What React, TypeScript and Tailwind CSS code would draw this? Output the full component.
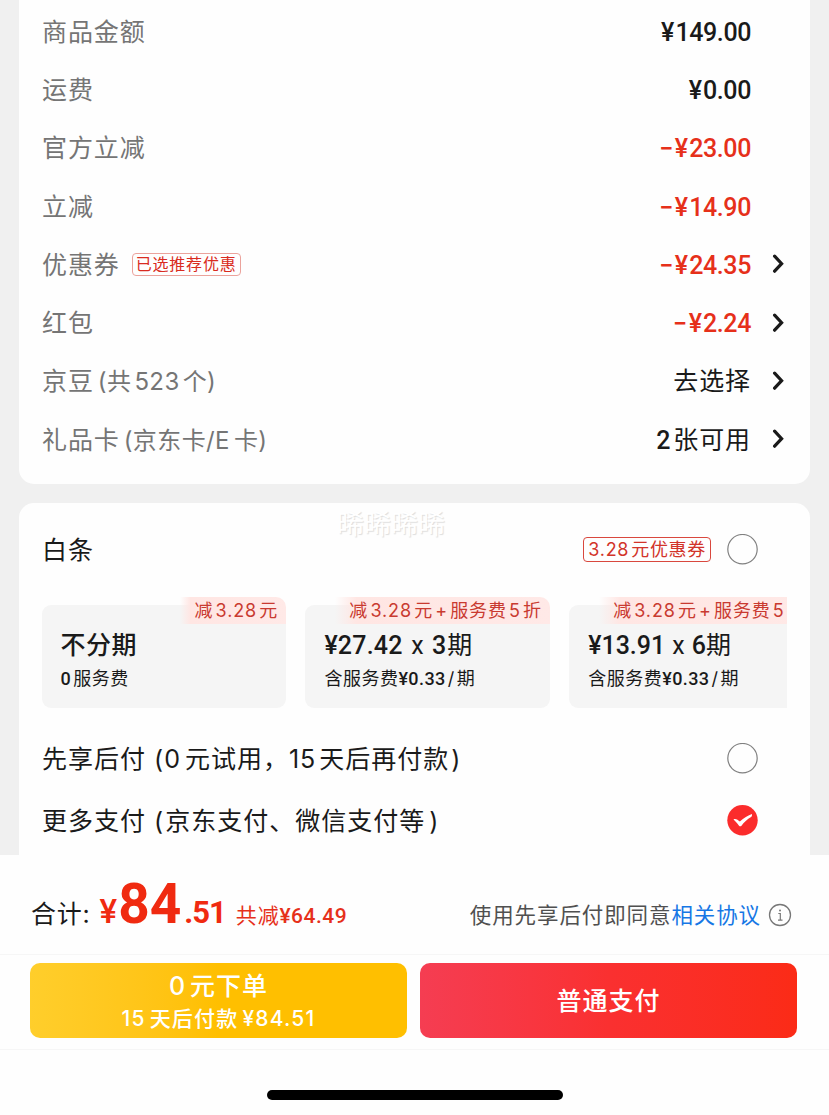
import type { ReactNode } from "react";

interface PriceRow {
  label: ReactNode;
  badge?: string;
  value: ReactNode;
  discount?: boolean;
  link?: boolean;
}

interface Plan {
  key: string;
  tag: string;
  title: ReactNode;
  fee: ReactNode;
}

const Num = ({ children, className = "" }: { children: ReactNode; className?: string }) => (
  <span className={`font-['Roboto'] font-medium ${className}`}>{children}</span>
);

const Price = ({ amount, minus = false }: { amount: string; minus?: boolean }) => (
  <Num className="tracking-[-0.4px]">
    {minus && <span className="mr-[2px]">−</span>}
    <span className="mr-[1.5px]">¥</span>
    {amount}
  </Num>
);

const rows: PriceRow[] = [
  { label: "商品金额", value: <Price amount="149.00" /> },
  { label: "运费", value: <Price amount="0.00" /> },
  { label: "官方立减", value: <Price amount="23.00" minus />, discount: true },
  { label: "立减", value: <Price amount="14.90" minus />, discount: true },
  {
    label: "优惠券",
    badge: "已选推荐优惠",
    value: <Price amount="24.35" minus />,
    discount: true,
    link: true,
  },
  { label: "红包", value: <Price amount="2.24" minus />, discount: true, link: true },
  {
    label: (
      <>
        京豆
        <span className="text-[24px] tracking-[0.4px]">
          <span className="ml-1">(共</span>
          <span className="mx-[3px]">523</span>个)
        </span>
      </>
    ),
    value: "去选择",
    link: true,
  },
  {
    label: (
      <>
        礼品卡
        <span className="text-[24px] tracking-[0.4px]">
          <span className="ml-1">(京东卡</span>
          <span className="mr-[4px]">/E</span>卡)
        </span>
      </>
    ),
    value: (
      <>
        <Num className="mr-[2px]">2</Num>张可用
      </>
    ),
    link: true,
  },
];

const plans: Plan[] = [
  {
    key: "once",
    tag: "减 3.28 元",
    title: <span className="font-medium tracking-[0.5px]">不分期</span>,
    fee: (
      <>
        <Num className="mr-0.5">0</Num>服务费
      </>
    ),
  },
  {
    key: "three",
    tag: "减 3.28 元 + 服务费 5 折",
    title: (
      <>
        <Num className="tracking-[0.2px]">¥27.42</Num>
        <span className="mx-[8.5px] font-['Roboto']">x</span>
        <Num className="mr-px">3</Num>期
      </>
    ),
    fee: (
      <>
        含服务费<Num className="tracking-[0.4px]">¥0.33</Num>
        <span className="mx-0.5">/</span>期
      </>
    ),
  },
  {
    key: "six",
    tag: "减 3.28 元 + 服务费 5 折",
    title: (
      <>
        <Num>¥13.91</Num>
        <span className="mx-[7px] font-['Roboto']">x</span>
        <Num>6</Num>期
      </>
    ),
    fee: (
      <>
        含服务费<Num className="tracking-[0.4px]">¥0.33</Num>
        <span className="mx-0.5">/</span>期
      </>
    ),
  },
];

const Chevron = () => (
  <svg width="13" height="20" viewBox="0 0 13 20" fill="none" className="ml-[20px] shrink-0">
    <path d="M3.6 2.2 L10.6 9.7 L3.6 17.2" stroke="#1a1a1a" strokeWidth="3.2" strokeLinecap="round" />
  </svg>
);

const Radio = ({ checked = false }: { checked?: boolean }) =>
  checked ? (
    <svg width="31" height="31" viewBox="0 0 31 31" className="shrink-0">
      <circle cx="15.5" cy="15.2" r="15.2" fill="#fb2c2c" />
      <path
        d="M6.5 14.4 C8.6 13.2 10.9 14.9 12.9 16.6 C16.3 13.3 20.3 10.6 24.9 9 C25.2 10.2 24.9 11.4 24.1 12.1 C20.2 14.4 17 17.4 14.3 20.9 C13.5 21.5 12.6 21.3 12 20.7 C10.4 18.2 8.6 16.2 6.5 14.4 Z"
        fill="#fff"
      />
    </svg>
  ) : (
    <svg width="31" height="31" viewBox="0 0 31 31" fill="none" className="shrink-0">
      <circle cx="15.5" cy="15.2" r="14.7" stroke="#808080" strokeWidth="1.2" />
    </svg>
  );

const App = () => {
  return (
    <div className="flex h-[1115px] w-[829px] flex-col overflow-hidden bg-[#f0f0f0] font-['Inter','Noto_Sans_CJK_SC',sans-serif] text-[#1a1a1a]">
      <main className="h-[855px] overflow-hidden px-[19px]">
        <section className="h-[484px] rounded-b-[15px] bg-[#fefefe] pl-[23px] pr-[26px] pt-[2px]">
          {rows.map((row, i) => (
            <div key={i} className="flex h-[58.3px] items-center text-[25px] leading-none tracking-[0.9px]">
              <span className="whitespace-nowrap pt-[2px] text-[#757575]">{row.label}</span>
              {row.badge && (
                <span className="ml-[12px] flex h-[23px] items-center rounded-[4px] border border-[#eba39c] px-[3px] text-[16px] tracking-[0.8px] text-[#d92b20]">
                  {row.badge}
                </span>
              )}
              <span
                className={`ml-auto whitespace-nowrap pt-[2px] ${row.discount ? "text-[#e6301a]" : ""} ${row.link ? "" : "mr-[33px]"}`}
              >
                {row.value}
              </span>
              {row.link && <Chevron />}
            </div>
          ))}
        </section>

        <section className="relative mt-[19px] h-[352px] rounded-t-[15px] bg-[#fefefe] px-[23px] pt-[24px]">
          <span className="absolute left-[318px] top-[8px] text-[27px] leading-[28px] text-white [text-shadow:1px_1px_1px_#ddd]">
            晞晞晞晞
          </span>
          <div className="flex h-[44px] items-center pr-[29px] text-[25px]">
            <span className="pt-[3px] leading-none tracking-[1px]">白条</span>
            <span className="ml-auto mr-[16px] flex h-[25px] items-center whitespace-nowrap rounded-[4px] border border-[#d9483e] px-[4px] text-[18px] leading-none tracking-[0.7px] text-[#d2342a]">
              <span className="pt-[2px]">
                <span className="mr-[2px]">3.28</span>元优惠券
              </span>
            </span>
            <Radio />
          </div>

          <div className="-ml-[0.4px] mt-[24px] flex gap-[19.2px] overflow-hidden pt-[10px]">
            {plans.map((plan) => (
              <div
                key={plan.key}
                className="relative h-[103px] w-[244.6px] shrink-0 rounded-[9px] bg-[#f5f5f5] pl-[19px] pt-[24px]"
              >
                <span className="absolute right-0 top-[-8px] flex h-[27px] items-center whitespace-nowrap rounded-tr-[10px] bg-linear-to-r from-[#ffe6e300] via-[#ffe6e3] via-10% to-[#ffe9e7] pl-[14px] pr-[8px] text-[18px] leading-none tracking-[0.9px] text-[#c93a30] [word-spacing:-3.8px]">
                  <span className="pt-px">{plan.tag}</span>
                </span>
                <div className="flex h-[32px] items-center whitespace-nowrap pt-px text-[25px] leading-none">
                  {plan.title}
                </div>
                <div className="mt-[3px] flex h-[28px] items-center whitespace-nowrap pt-[2px] text-[18px] leading-none tracking-[0.5px]">
                  {plan.fee}
                </div>
              </div>
            ))}
          </div>

          <div className="mt-[19px] flex h-[62px] items-center pr-[29px] text-[25px] tracking-[1px]">
            <span className="whitespace-nowrap pt-[3px] leading-none">
              先享后付 (<span className="mr-1">0</span>元试用，<span className="mr-[3px]">15</span>天后再付款
              <span className="ml-[2px]">)</span>
            </span>
            <span className="ml-auto">
              <Radio />
            </span>
          </div>
          <div className="flex h-[62px] items-center pr-[29px] text-[25px] tracking-[1px]">
            <span className="whitespace-nowrap pt-[3px] leading-none">
              更多支付 <span className="mr-px">(</span>京东支付、微信支付等<span className="ml-[4px]">)</span>
            </span>
            <span className="ml-auto">
              <Radio checked />
            </span>
          </div>
        </section>
      </main>

      <footer className="flex h-[260px] flex-col bg-[#fefefe]">
        <div className="flex h-[99px] items-end pb-[22px] pl-[31px] pr-[37px]">
          <div className="flex items-baseline whitespace-nowrap leading-none">
            <span className="text-[25px] tracking-[0.8px]">合计:</span>
            <span className="ml-[9px] flex items-baseline font-['Roboto'] text-[#f02a10]">
              <span className="text-[33px] font-medium">¥</span>
              <span className="ml-px text-[55px] font-bold">84</span>
              <span className="ml-[3px] text-[31px] font-bold tracking-[-1px]">.51</span>
            </span>
            <span className="ml-[10px] text-[21px] tracking-[0.8px] text-[#e6301a]">
              共减<Num className="tracking-[0.5px]">¥64.49</Num>
            </span>
          </div>
          <div className="mb-[3px] ml-auto flex items-center whitespace-nowrap text-[21.5px] leading-none tracking-[0.9px] text-[#505050]">
            使用先享后付即同意<span className="text-[#1677e5]">相关协议</span>
            <svg width="24" height="24" viewBox="0 0 24 24" fill="none" stroke="#777" className="mb-[2px] ml-[7px]">
              <circle cx="12" cy="12" r="10.5" strokeWidth="1.3" />
              <circle cx="12" cy="7.4" r="1" fill="#777" stroke="none" />
              <path d="M10.3 10.5H12.3V17M10 17.2H14.5" strokeWidth="1.2" />
            </svg>
          </div>
        </div>

        <div className="flex h-[96px] gap-[13px] border-y border-[#f6f6f6] px-[30px] pt-[8px] text-white">
          <button className="flex h-[75px] w-[377px] flex-col items-center rounded-[10px] bg-linear-to-r from-[#ffce2b] to-[#ffbf00] to-50% pt-[8px] leading-none">
            <span className="flex h-[30px] items-center text-[25px] font-medium tracking-[1px]">
              <span className="mr-1">0</span>元下单
            </span>
            <span className="mt-[2px] flex h-[30px] items-center text-[21px] font-medium tracking-[1.2px]">
              <span className="mr-1">15</span>天后付款<span className="ml-1">¥84.51</span>
            </span>
          </button>
          <button className="flex h-[75px] w-[377px] items-center justify-center rounded-[10px] bg-linear-to-r from-[#f53d52] via-[#fa3030] to-[#fb2b16] pt-[2px] text-[25px] font-medium leading-none tracking-[1px]">
            普通支付
          </button>
        </div>

        <div className="mx-auto mt-[40px] h-[10px] w-[296px] rounded-full bg-black" />
      </footer>
    </div>
  );
};

export default App;
